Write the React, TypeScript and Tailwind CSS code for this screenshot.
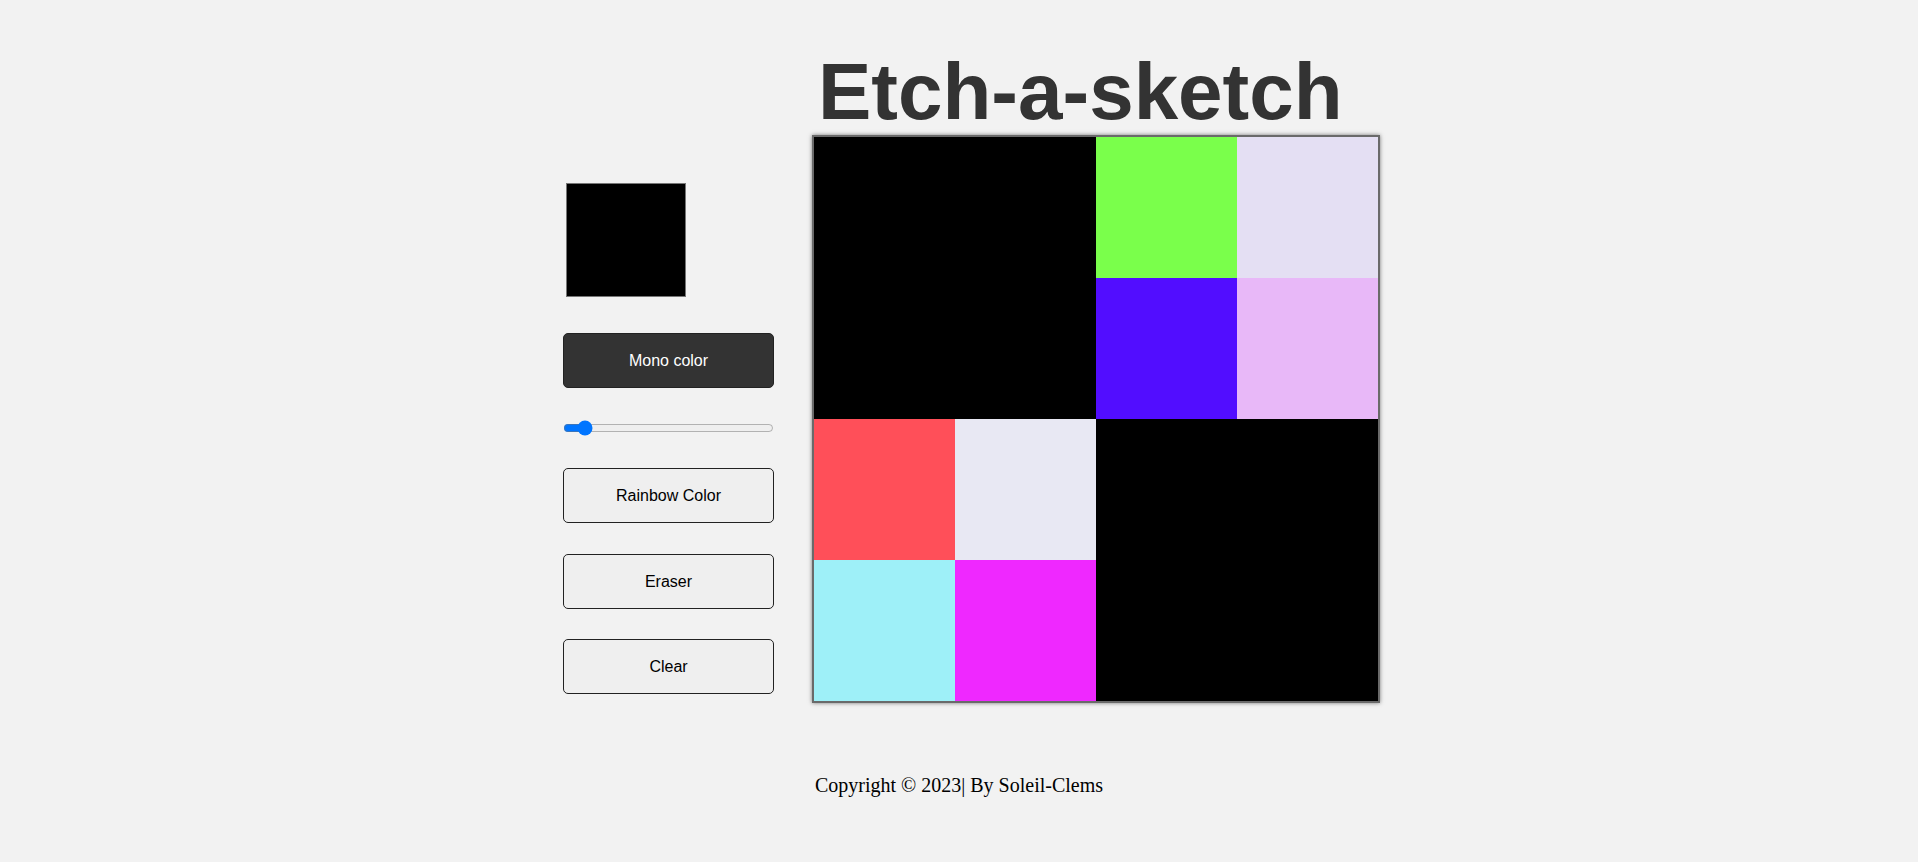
import { useState } from "react";

const CELLS: string[] = [
  "#000000", "#000000", "#7aff4b", "#e4dff3",
  "#000000", "#000000", "#520dff", "#e8b8f8",
  "#ff4f59", "#e8e8f3", "#000000", "#000000",
  "#9ef0f8", "#ef28ff", "#000000", "#000000",
];

const FONT = { fontFamily: '"Liberation Sans", Arial, sans-serif' };

export default function App() {
  const [size, setSize] = useState(8);

  return (
    <div className="min-h-screen bg-[#f2f2f2]" style={FONT}>
      <div className="flex justify-center pl-[25px] pt-[52px]">
        <div className="flex items-start gap-[38px]">
          {/* Controls */}
          <div className="flex w-[211px] flex-col pt-[131px]">
            <div className="ml-[3px] h-[114px] w-[120px] border border-[#767676] bg-black" />
            <button className="mt-[36px] h-[55px] w-[211px] rounded-[5px] border border-[#222] bg-[#333333] text-[16px] text-white">
              Mono color
            </button>
            <input
              type="range"
              min={1}
              max={100}
              value={size}
              onChange={(e) => setSize(Number(e.target.value))}
              className="m-0 mt-[32px] block h-4 w-[211px]"
            />
            <button className="mt-[32px] h-[55px] w-[211px] rounded-[5px] border border-[#222] bg-[#efefef] text-[16px] text-black">
              Rainbow Color
            </button>
            <button className="mt-[31px] h-[55px] w-[211px] rounded-[5px] border border-[#222] bg-[#efefef] text-[16px] text-black">
              Eraser
            </button>
            <button className="mt-[30px] h-[55px] w-[211px] rounded-[5px] border border-[#222] bg-[#efefef] text-[16px] text-black">
              Clear
            </button>
          </div>

          {/* Board */}
          <div className="flex flex-col">
            <h1 className="pl-[6px] text-[80px] font-bold leading-none text-[#333333]">
              Etch-a-sketch
            </h1>
            <div className="mt-[3px] grid h-[568px] w-[568px] grid-cols-4 border-2 border-[#6a6a6a] shadow-[0_0_4px_#777777]">
              {CELLS.map((c, i) => (
                <div key={i} style={{ backgroundColor: c }} />
              ))}
            </div>
          </div>
        </div>
      </div>

      <footer
        className="mt-[67px] text-center text-[20px] text-black"
        style={{ fontFamily: '"Liberation Serif", "Times New Roman", serif' }}
      >
        Copyright © 2023| By Soleil-Clems
      </footer>
    </div>
  );
}
